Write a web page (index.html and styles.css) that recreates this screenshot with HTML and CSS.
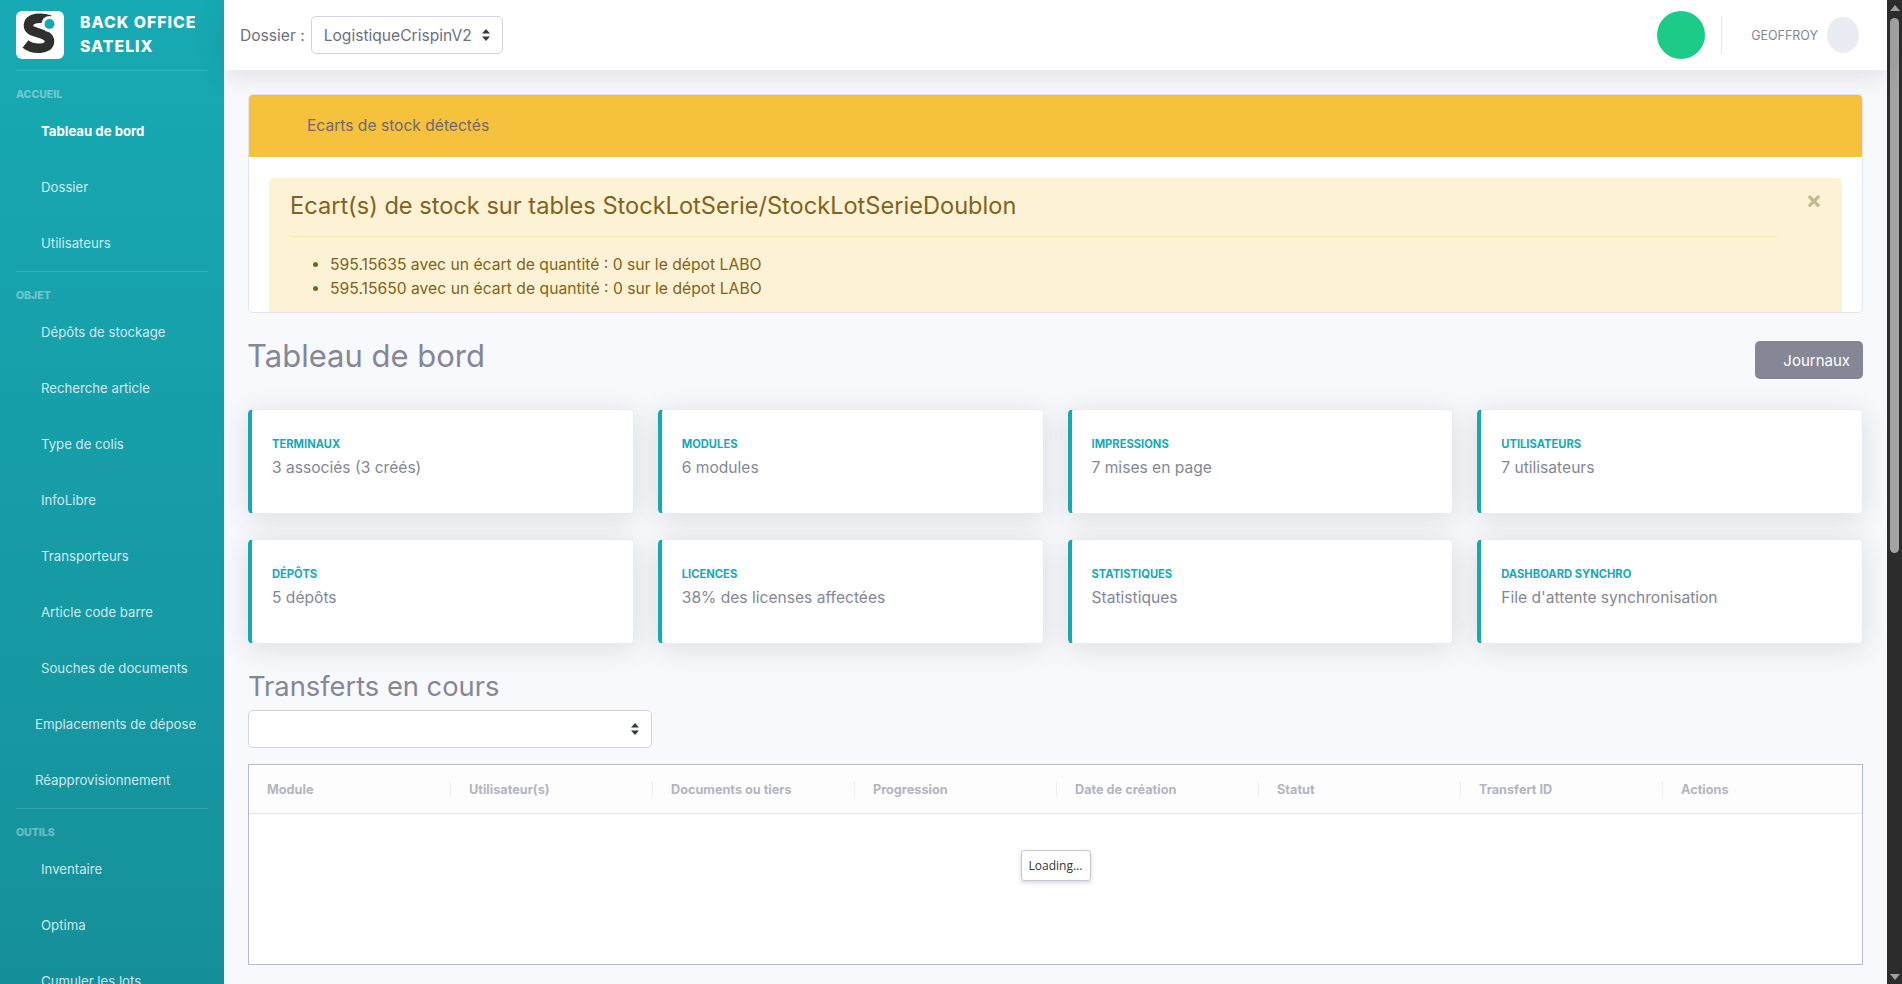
FILE: index.html
```html
<!DOCTYPE html>
<html lang="fr">
<head>
    <meta charset="utf-8">
    <title>Back Office Satelix</title>
    <link rel="stylesheet" href="styles.css">
</head>
<body>
<div class="app">
    <aside class="sidebar">
        <div class="brand">
            <span class="brand-logo">
                <svg width="48" height="48" viewBox="0 0 48 48">
                    <path d="M34 9C26 6 12 6 12.5 15C13 24 33.5 20 33.5 30.5C33.5 39 17 39 9.5 33" fill="none" stroke="#2f2f2f" stroke-width="9.5"/>
                    <circle cx="33.5" cy="13" r="8" fill="#fff"/>
                    <circle cx="33.5" cy="13" r="5" fill="#17a9b3"/>
                </svg>
            </span>
            <span class="brand-name">BACK OFFICE<br>SATELIX</span>
        </div>
        <hr class="side-hr">
        <div class="side-title">ACCUEIL</div>
        <a class="side-link active">Tableau de bord</a>
        <a class="side-link">Dossier</a>
        <a class="side-link">Utilisateurs</a>
        <hr class="side-hr">
        <div class="side-title">OBJET</div>
        <a class="side-link">Dépôts de stockage</a>
        <a class="side-link">Recherche article</a>
        <a class="side-link">Type de colis</a>
        <a class="side-link">InfoLibre</a>
        <a class="side-link">Transporteurs</a>
        <a class="side-link">Article code barre</a>
        <a class="side-link">Souches de documents</a>
        <a class="side-link wide">Emplacements de dépose</a>
        <a class="side-link wide">Réapprovisionnement</a>
        <hr class="side-hr">
        <div class="side-title">OUTILS</div>
        <a class="side-link">Inventaire</a>
        <a class="side-link">Optima</a>
        <a class="side-link">Cumuler les lots</a>
    </aside>

    <div class="content">
        <header class="topbar">
            <label class="folder-label">Dossier :</label>
            <div class="select folder-select">LogistiqueCrispinV2
                <svg class="carets" width="8" height="12" viewBox="0 0 8 12"><path d="M4 0L8 4.5H0ZM4 12L0 7.5H8Z" fill="#343a40"/></svg>
            </div>
            <span class="status-dot"></span>
            <span class="top-divider"></span>
            <span class="user-name">GEOFFROY</span>
            <span class="avatar"></span>
        </header>

        <main class="main">
            <section class="panel">
                <div class="panel-header">Ecarts de stock détectés</div>
                <div class="panel-body">
                    <div class="alert">
                        <span class="alert-close">&times;</span>
                        <h4 class="alert-title">Ecart(s) de stock sur tables StockLotSerie/StockLotSerieDoublon</h4>
                        <hr class="alert-hr">
                        <ul class="alert-list">
                            <li>595.15635 avec un écart de quantité : 0 sur le dépot LABO</li>
                            <li>595.15650 avec un écart de quantité : 0 sur le dépot LABO</li>
                        </ul>
                    </div>
                </div>
            </section>

            <div class="page-head">
                <h1 class="page-title">Tableau de bord</h1>
                <button class="btn-journal">Journaux</button>
            </div>

            <div class="stat-grid">
                <div class="stat-card"><div class="stat-label">TERMINAUX</div><div class="stat-value">3 associés (3 créés)</div></div>
                <div class="stat-card"><div class="stat-label">MODULES</div><div class="stat-value">6 modules</div></div>
                <div class="stat-card"><div class="stat-label">IMPRESSIONS</div><div class="stat-value">7 mises en page</div></div>
                <div class="stat-card"><div class="stat-label">UTILISATEURS</div><div class="stat-value">7 utilisateurs</div></div>
                <div class="stat-card"><div class="stat-label">DÉPÔTS</div><div class="stat-value">5 dépôts</div></div>
                <div class="stat-card"><div class="stat-label">LICENCES</div><div class="stat-value">38% des licenses affectées</div></div>
                <div class="stat-card"><div class="stat-label">STATISTIQUES</div><div class="stat-value">Statistiques</div></div>
                <div class="stat-card"><div class="stat-label">DASHBOARD SYNCHRO</div><div class="stat-value">File d'attente synchronisation</div></div>
            </div>

            <h2 class="section-title">Transferts en cours</h2>
            <div class="select transfer-select">
                <svg class="carets" width="8" height="12" viewBox="0 0 8 12"><path d="M4 0L8 4.5H0ZM4 12L0 7.5H8Z" fill="#343a40"/></svg>
            </div>

            <div class="transfer-table">
                <div class="table-head">
                    <div class="table-cell">Module</div>
                    <div class="table-cell">Utilisateur(s)</div>
                    <div class="table-cell">Documents ou tiers</div>
                    <div class="table-cell">Progression</div>
                    <div class="table-cell">Date de création</div>
                    <div class="table-cell">Statut</div>
                    <div class="table-cell">Transfert ID</div>
                    <div class="table-cell">Actions</div>
                </div>
                <div class="table-body">
                    <div class="loading">Loading...</div>
                </div>
            </div>
        </main>
    </div>

    <div class="scrollbar">
        <span class="scroll-up"></span>
        <span class="scroll-thumb"></span>
        <span class="scroll-down"></span>
    </div>
</div>
</body>
</html>
```

FILE: styles.css
```css
* {
    box-sizing: border-box;
}

html, body {
    margin: 0;
    height: 100%;
    overflow: hidden;
}

body {
    font-family: Inter, "Liberation Sans", sans-serif;
    font-size: 15.6px;
    color: #858796;
    background-color: #f8f9fc;
}

.app {
    display: flex;
    height: 984px;
    overflow: hidden;
}

/* sidebar */
.sidebar {
    width: 224px;
    flex-shrink: 0;
    height: 984px;
    overflow: hidden;
    padding: 0 16px;
    background: linear-gradient(180deg, #17aab4 0%, #15909a 100%);
}

.brand {
    display: flex;
    align-items: center;
    gap: 16px;
    height: 70px;
}

.brand-logo {
    width: 48px;
    height: 48px;
    background-color: #fff;
    border-radius: 6px;
    overflow: hidden;
}

.brand-logo svg {
    display: block;
}

.brand-name {
    color: #fff;
    font-size: 15.8px;
    font-weight: 800;
    line-height: 24px;
    letter-spacing: 1px;
}

.side-hr {
    margin: 0;
    border: 0;
    border-top: 1px solid rgba(255, 255, 255, 0.15);
}

.side-title {
    height: 32px;
    padding-top: 19px;
    font-size: 10.5px;
    line-height: 10px;
    font-weight: 800;
    color: rgba(255, 255, 255, 0.4);
}

.side-link {
    display: flex;
    align-items: center;
    height: 56px;
    padding-left: 25px;
    font-size: 13.2px;
    color: rgba(255, 255, 255, 0.8);
}

.side-link.wide {
    padding-left: 19px;
}

.side-link.active {
    color: #fff;
    font-weight: 700;
}

/* top bar */
.content {
    flex: 1;
    min-width: 0;
    background-color: #f8f9fc;
}

.topbar {
    display: flex;
    align-items: center;
    height: 70px;
    padding: 0 28px 0 16px;
    background-color: #fff;
    box-shadow: 0 4px 28px rgba(58, 59, 69, 0.15);
    position: relative;
}

.folder-label {
    margin-right: 6px;
    color: #6e707e;
}

.select {
    display: flex;
    align-items: center;
    height: 38px;
    background-color: #fff;
    border: 1px solid #d1d3e2;
    border-radius: 5px;
    color: #6e707e;
    position: relative;
}

.folder-select {
    width: 192px;
    padding-left: 12px;
}

.transfer-select {
    width: 404px;
}

.carets {
    position: absolute;
    right: 12px;
    top: 12px;
}

.status-dot {
    width: 48px;
    height: 48px;
    margin-left: auto;
    border-radius: 50%;
    background-color: #1ccb88;
}

.top-divider {
    width: 1px;
    height: 38px;
    margin: 0 29px 0 16px;
    background-color: #e3e6f0;
}

.user-name {
    margin-right: 9px;
    font-size: 12.5px;
    color: #858796;
}

.avatar {
    width: 32px;
    height: 36px;
    border-radius: 50%;
    background-color: #eaecf4;
}

/* main column */
.main {
    padding: 24px 24px 0 24px;
}

.panel {
    height: 219px;
    overflow: hidden;
    background-color: #fff;
    border: 1px solid #e3e6f0;
    border-radius: 5px;
}

.panel-header {
    height: 62px;
    padding-left: 58px;
    line-height: 62px;
    color: #6e6a6e;
    background-color: #f6c13d;
}

.panel-body {
    padding: 21px 20px 0 20px;
}

.alert {
    position: relative;
    height: 200px;
    padding: 13px 65px 0 21px;
    color: #826319;
    background-color: #fdf2d6;
    border-radius: 5px;
}

.alert-close {
    position: absolute;
    top: 10px;
    right: 20px;
    font-size: 24px;
    font-weight: 700;
    line-height: 24px;
    color: #c7b68a;
}

.alert-title {
    margin: 0;
    font-size: 23.6px;
    font-weight: 400;
    line-height: 30px;
}

.alert-hr {
    margin: 15px 0 16px 0;
    border: 0;
    border-top: 1px solid #fbe6b0;
}

.alert-list {
    margin: 0;
    padding-left: 40px;
    font-size: 15.7px;
    line-height: 24px;
}

.page-head {
    display: flex;
    justify-content: space-between;
    align-items: flex-start;
    height: 96px;
    padding-top: 28px;
}

.page-title {
    margin: -4px 0 0 -1px;
    font-size: 31px;
    font-weight: 400;
    line-height: 38px;
    color: #858796;
}

.btn-journal {
    width: 108px;
    height: 38px;
    padding: 0 13px 0 0;
    border: 0;
    border-radius: 5px;
    font-family: inherit;
    font-size: 15px;
    text-align: right;
    color: #fff;
    background-color: #858796;
}

.stat-grid {
    display: grid;
    grid-template-columns: repeat(4, 1fr);
    gap: 25px 24px;
}

.stat-card {
    height: 105px;
    padding: 28px 19px 0 20px;
    background-color: #fff;
    border: 1px solid #eaebf2;
    border-left: 4px solid #17a9b3;
    border-radius: 5px;
    box-shadow: 0 4px 28px rgba(58, 59, 69, 0.15);
}

.stat-label {
    font-size: 11.2px;
    font-weight: 700;
    line-height: 13px;
    color: #17a9b3;
}

.stat-value {
    margin-top: 6px;
    line-height: 22px;
    color: #858796;
}

.section-title {
    margin: 26px 0 6px 0;
    font-size: 27.3px;
    font-weight: 400;
    line-height: 34px;
    color: #858796;
}

.transfer-table {
    margin-top: 16px;
    height: 201px;
    overflow: hidden;
    background-color: #fff;
    border: 1px solid #b7b9cc;
}

.table-head {
    display: grid;
    grid-template-columns: repeat(8, 202px);
    align-items: center;
    height: 49px;
    background-color: #fdfdfe;
    border-bottom: 1px solid #e3e6f0;
}

.table-cell {
    height: 15px;
    padding-left: 18px;
    font-size: 12.7px;
    font-weight: 700;
    line-height: 15px;
    color: #b4b5bd;
    border-right: 1px solid #eeeff4;
}

.table-cell:last-child {
    border-right: 0;
}

.table-body {
    display: flex;
    justify-content: center;
    padding-top: 36px;
}

.loading {
    width: 70px;
    height: 31px;
    font-family: "Open Sans", sans-serif;
    font-size: 12px;
    line-height: 29px;
    text-align: center;
    color: #333;
    background-color: #fff;
    border: 1px solid #c6c8d6;
    border-radius: 3px;
    box-shadow: 0 2px 4px rgba(58, 59, 69, 0.2);
}

/* fake window scrollbar */
.scrollbar {
    display: flex;
    flex-direction: column;
    align-items: center;
    width: 15px;
    flex-shrink: 0;
    padding: 5px 2px 4px 2px;
    background-color: #2c2c2c;
}

.scroll-up {
    width: 0;
    height: 0;
    border: 5px solid transparent;
    border-top: 0;
    border-bottom: 6px solid #a3a3a3;
}

.scroll-thumb {
    width: 9px;
    height: 535px;
    margin-top: 7px;
    border-radius: 5px;
    background-color: #a3a3a3;
}

.scroll-down {
    width: 0;
    height: 0;
    margin-top: auto;
    border: 5px solid transparent;
    border-bottom: 0;
    border-top: 6px solid #a3a3a3;
}
```
